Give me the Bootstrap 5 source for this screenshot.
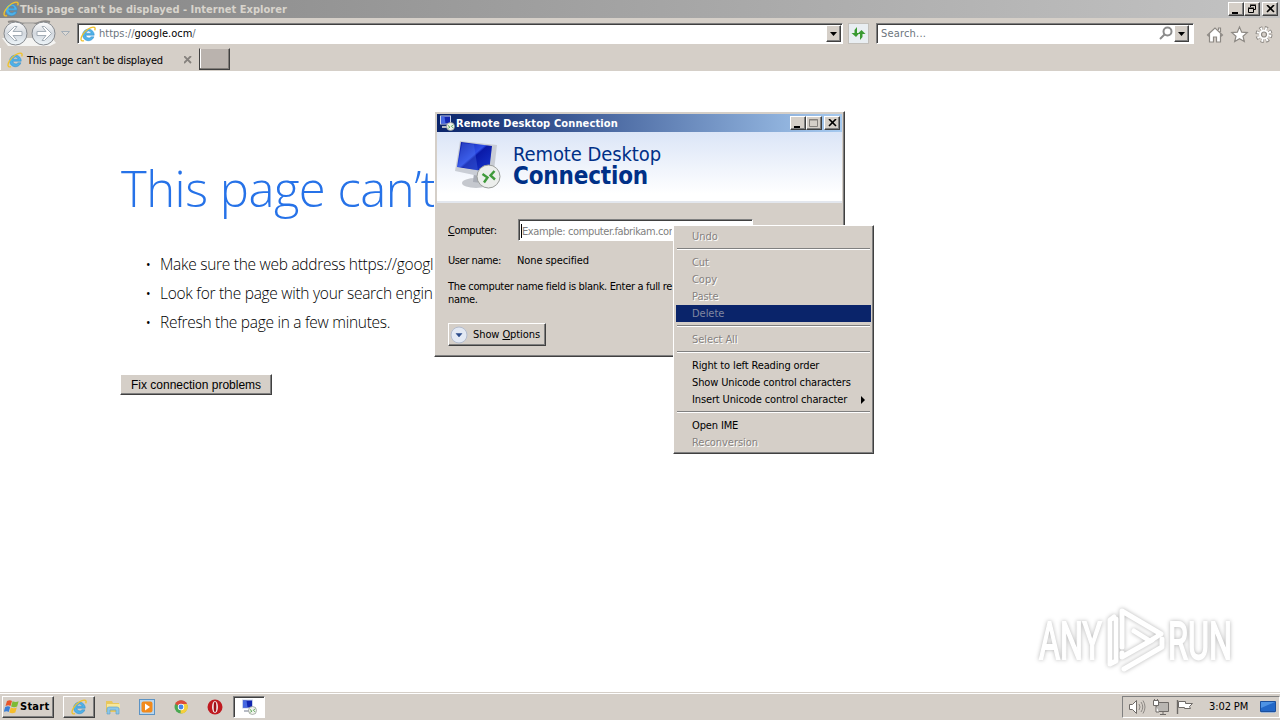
<!DOCTYPE html>
<html lang="en">
<head>
<meta charset="utf-8">
<meta name="viewport" content="width=device-width, initial-scale=1">
<title>This page can't be displayed</title>
<link href="https://cdn.jsdelivr.net/npm/bootstrap@5.3.0/dist/css/bootstrap.min.css" rel="stylesheet">
<script src="https://cdn.jsdelivr.net/npm/bootstrap@5.3.0/dist/js/bootstrap.bundle.min.js" defer></script>
<style>
:root{--face:#d5cfc8;--lo:#808080;--dk:#404040}
body{font:11px/13px "DejaVu Sans Condensed","DejaVu Sans",sans-serif;color:#000;background:#fff;white-space:nowrap}
svg{display:block;flex:none}
.face{background:var(--face)}
.raised{background:var(--face);border:1px solid;border-color:#fff var(--dk) var(--dk) #fff;box-shadow:inset -1px -1px var(--lo)}
.sunken{background:#fff;border:1px solid;border-color:var(--lo) #fff #fff var(--lo);box-shadow:inset 1px 1px var(--dk)}
.ie-title{height:18px;background:linear-gradient(90deg,#858585,#c3c3c3);color:#d8d4cc;font-weight:700;padding:0 2px 0 3px;letter-spacing:.02px;gap:1px}
.cap-btn{width:16px;height:14px;display:grid;place-items:center}
.cap-close{margin-left:2px}
.ie-nav{height:30px}
.addr{height:21px;width:766px;margin-left:6px;padding:2px 1px 1px 2px;gap:3px}
.srch{height:21px;width:318px;margin-left:7px;padding:2px 4px 1px 4px;letter-spacing:.18px}
.drop{width:15px;height:17px;display:grid;place-items:center}
.refresh{width:21px;height:21px;margin-left:5px;border:1px solid #c2bfba;background:#e9eef2;display:grid;place-items:center}
.tools{margin-left:5px}
.ie-tabs{height:23px}
.tab-on{width:199px;height:22px;border-left:1px solid #fff;padding:2px 6px 0 6px;letter-spacing:-.21px;gap:4px}
.tab-new{width:31px;height:22px;background:#bab3ae;border:1px solid var(--dk);border-top-color:#d5cfc8;box-shadow:inset -1px -1px #807c78,inset 1px 0 #fff}
.page{padding:87px 0 0 120px;font-family:"Open Sans",sans-serif;font-weight:300}
.page-text{width:315px}
.page h1{font-size:49px;line-height:60px;font-weight:300;color:#2672e8;margin:0 0 0 1px;letter-spacing:-.5px}
.tips{margin:32px 0 0;padding-left:40px;font-size:15.5px;line-height:29px;color:#000;list-style:none;letter-spacing:-.28px}
.tips li::before{content:"•";font-size:12px;font-weight:400;position:absolute;margin-left:-14px}
.fix{margin-top:37px;width:152px;height:21px;font:12px/18px "Liberation Sans",sans-serif;padding:0 0 0 10px}
.rdp{position:absolute;left:434px;top:111px;width:411px;height:246px;padding:2px}
.rdp-title{height:18px;background:linear-gradient(90deg,#0a246a,#a6caf0);color:#fff;font-weight:700;padding:0 2px;gap:1px;letter-spacing:.14px}
.rdp-head{height:71px;background:linear-gradient(#dbe5f7,#fff 90%);border-bottom:2px solid #e3e7ee;padding:7px 0 0 17px;color:#003087;gap:11px}
.rdp-head svg{margin-top:1px}
.rdp-head .l1{font-size:20px;line-height:24px;margin-top:3px;letter-spacing:-.09px}
.rdp-head .l2{font-size:24px;line-height:20px;font-weight:700;letter-spacing:-.18px}
.rdp-body{padding:16px 11px 0}
.lbl{width:69px;letter-spacing:-.42px}
.lbl.pt-px{padding-top:1px}
.none-spec{letter-spacing:-.1px}
.comp{width:235px;height:22px;padding:4px 2px;color:#808080;letter-spacing:-.38px;margin-left:1px}
.comp-text{width:151px;border-left:1px solid #000;padding-top:1px;overflow:hidden}
.who{margin-top:13px}
.note{margin:13px 0 0;width:225px;letter-spacing:-.32px}
.opts{width:98px;height:23px;margin-top:17px;letter-spacing:-.09px;padding:0}
.menu-win{position:absolute;left:673px;top:225px;width:201px;height:229px;padding:2px}
.mi{height:17px;padding:0 3px 0 16px;letter-spacing:-.14px}
.mi.off{color:#868280;text-shadow:1px 1px #fff;letter-spacing:-.04px}
.mi.hot{background:#0a246a;text-shadow:none;color:#8087a0}
.ms{height:9px;padding:3px 1px 0}
.ms::before{content:"";display:block;height:2px;border-top:1px solid var(--lo);background:#fff}
.watermark{position:absolute;left:1030px;top:599px;filter:drop-shadow(0 0 2px #b4b4b4)}
.taskbar{height:28px;border-top:1px solid #d5cfc8;box-shadow:inset 0 1px #fff;padding:2px 0 2px 2px}
.start{width:52px;height:22px;padding:0 0 0 1px;letter-spacing:.25px}
.task{width:32px;height:22px;display:grid;place-items:center}
.task-first{margin-left:9px}
.task-chrome,.task-rdp{margin-left:2px}
.tray{width:158px;height:22px;border:1px solid;border-color:var(--lo) #fff #fff var(--lo);padding:0 3px 0 4px}
.clock{letter-spacing:-.1px;margin:0 12px 0 14px}
</style>
</head>
<body class="vh-100 overflow-hidden d-flex flex-column position-relative">
<svg width="0" height="0" class="position-absolute">
<defs>
<linearGradient id="scr" x2="1" y2="1"><stop stop-color="#0a17a0"/><stop offset=".45" stop-color="#2f4fe8"/><stop offset=".5" stop-color="#0a1aa8"/><stop offset="1" stop-color="#1838d0"/></linearGradient>
<linearGradient id="orb" y2="1" x2="0"><stop stop-color="#fff"/><stop offset=".5" stop-color="#d3d8de"/><stop offset="1" stop-color="#eef6fa"/></linearGradient>
<symbol id="ie" viewBox="0 0 16 16"><path d="M14.200 9.200H5.800a2.900 2.900 0 0 0 5.200 1.600h2.900a5.800 5.800 0 1 1 .3-1.600zM5.900 7.200h5.300a2.700 2.700 0 0 0-5.300 0z" fill="#4fb2e8" stroke="#2a86c8" stroke-width=".5" fill-rule="evenodd"/><path d="M4 14.600C.9 16-.1 13 2.500 8.800 5.500 4.200 11.800-.2 14.400 1.400c1 .7.8 1.900.2 3" fill="none" stroke="#f0c22c" stroke-width="1.300"/></symbol>
<symbol id="rd" viewBox="0 0 48 50"><ellipse cx="22" cy="43" rx="14" ry="5" fill="#c5c8ce"/><path d="M20 32l10 3-2 8-9-1z" fill="#a9adb6"/><path d="M6 1l37 4-4 34L1 31z" fill="#c9cdd5"/><path d="M7 2l31 4-3 26L3 27z" fill="url(#scr)"/><path d="M8 3l12 1.500 4 26-20-4z" fill="#5a80f0" opacity=".3"/><circle cx="34.500" cy="36.500" r="11.500" fill="#eceeec" stroke="#9a9d9a"/><path d="M28.500 34l5 3.500-3.500 5M40.500 31l-4 4.500 4.500 4" fill="none" stroke="#3f9a3a" stroke-width="2.400"/></symbol>
<symbol id="rds" viewBox="0 0 16 16"><path d="M1 .5h11v9H1z" fill="#c9d2ea"/><path d="M2 1.500h9v7H2z" fill="#1226b0"/><path d="M2 1.500h3.500l1 7H2z" fill="#4668e0"/><path d="M3 11h6v2H3z" fill="#b8bcc6"/><circle cx="11.500" cy="11.500" r="4" fill="#eef2ea" stroke="#8d928c" stroke-width=".7"/><path d="M9 10.500l1.800 1.500-1.500 1.500M13.900 9.800l-1.400 1.500 1.400 1.500" fill="none" stroke="#3f9a3a" stroke-width=".9"/></symbol>
<symbol id="dn" viewBox="0 0 7 4"><path d="M0 0h7L3.500 4z"/></symbol>
</defs>
</svg>

<header class="ie-title d-flex align-items-center">
  <svg width="16" height="16"><use href="#ie"/></svg><span>This page can't be displayed - Internet Explorer</span>
  <div class="ms-auto d-flex">
    <span class="cap-btn raised"><svg width="10" height="9"><path d="M1 7h6v2H1z"/></svg></span>
    <span class="cap-btn raised"><svg width="10" height="10" fill="none" stroke="#000"><path d="M3.500 3V1.500h5v4H7M3 1h6M1.500 4.500h5v4h-5zM1 4h6"/></svg></span>
    <span class="cap-btn cap-close raised"><svg width="9" height="8" stroke="#000" stroke-width="1.600"><path d="M1 0l7 7M8 0L1 7"/></svg></span>
  </div>
</header>
<nav class="ie-nav face d-flex align-items-center">
  <svg width="71" height="30"><path d="M2 20h50l4 5-6 3H8z" fill="#f4f4f2"/><path d="M8 4q6-2 12 1 9 5 18 0 6-3 12-1" stroke="#8e8b88" stroke-width="2" fill="#b5b2ae"/><path d="M22 6h15v14H22z" fill="#c9c6c2"/><circle cx="15.500" cy="15.500" r="11.500" fill="url(#orb)" stroke="#85898e"/><circle cx="43.500" cy="15.500" r="11.500" fill="url(#orb)" stroke="#85898e"/><g fill="#fff" stroke="#a3adb6"><path d="M7.500 15.500l7-7h2.500l-4 5h9v4h-9l4 5h-2.500z"/><path d="M51.500 15.500l-7-7H42l4 5h-9v4h9l-4 5h2.500z"/><path d="M61.500 13.500h8l-4 4z" fill="#dedad5"/></g></svg>
  <div class="addr sunken d-flex align-items-center"><svg width="16" height="16"><use href="#ie"/></svg><span class="text-secondary">https://<span class="text-black">google.ocm</span>/</span><span class="drop raised ms-auto"><svg width="7" height="4"><use href="#dn"/></svg></span></div>
  <span class="refresh"><svg width="15" height="15" fill="#3a9a32"><path d="M6 1L3.500 4v3H.500L5 11l3.500-4H6z"/><path d="M9 14l2.500-3V8h3L10.500 4 6.500 8H9z"/></svg></span>
  <div class="srch sunken d-flex align-items-center"><span class="text-secondary">Search...</span><svg class="ms-auto" width="15" height="15" fill="none" stroke="#8b8b8b" stroke-width="2"><circle cx="8.500" cy="5.500" r="4"/><path d="M5.500 8.500l-4.500 4.500"/></svg><span class="drop raised"><svg width="7" height="4"><use href="#dn"/></svg></span></div>
  <svg class="tools" width="76" height="30" fill="#fff" stroke="#8d8984" stroke-width="1.200"><path d="M8.500 17l7.500-7 7.500 7-1 1-1-1v7h-4v-5h-3v5h-4v-7l-1 1zM19.500 12v-2h2v4"/><path d="M40.500 9l2.200 5.200 5.500.4-4.200 3.600 1.300 5.400-4.800-2.900-4.800 2.900 1.300-5.400-4.200-3.600 5.500-.4z"/><g transform="translate(65 16.500)"><circle r="6.500" fill="none" stroke-width="4" stroke-dasharray="2.900 2.200"/><circle r="6" fill="none" stroke="#fff" stroke-width="3" stroke-dasharray="1.800 2.910" stroke-dashoffset="-.5"/><circle r="3.600" fill="none" stroke="#fff" stroke-width="2.500"/><circle r="2.500" fill="#d5cfc8"/></g></svg>
</nav>
<div class="ie-tabs face d-flex">
  <div class="tab-on d-flex align-items-center"><svg width="16" height="16"><use href="#ie"/></svg><span>This page can't be displayed</span><svg class="ms-auto" width="9" height="8" stroke="#85817d" stroke-width="1.800"><path d="M0 0l7 7M7 0L0 7"/></svg></div>
  <div class="tab-new"></div>
</div>

<main class="page flex-grow-1">
  <div class="page-text overflow-hidden">
    <h1>This page can’t</h1>
    <ul class="tips">
      <li>Make sure the web address https://googl</li>
      <li>Look for the page with your search engin</li>
      <li>Refresh the page in a few minutes.</li>
    </ul>
  </div>
  <button class="fix raised text-start d-block">Fix connection problems</button>
</main>

<section class="rdp raised">
  <div class="rdp-title d-flex align-items-center"><svg width="16" height="16"><use href="#rds"/></svg><span>Remote Desktop Connection</span>
    <div class="ms-auto d-flex">
      <span class="cap-btn raised"><svg width="10" height="9"><path d="M1 7h6v2H1z"/></svg></span>
      <span class="cap-btn raised"><svg width="10" height="10" fill="none" stroke="#85817d"><path d="M.500 1.500h8v7h-8zM0 2h9"/></svg></span>
      <span class="cap-btn cap-close raised"><svg width="9" height="8" stroke="#000" stroke-width="1.600"><path d="M1 0l7 7M8 0L1 7"/></svg></span>
    </div>
  </div>
  <div class="rdp-head d-flex"><svg width="48" height="50"><use href="#rd"/></svg><div><div class="l1">Remote Desktop</div><div class="l2">Connection</div></div></div>
  <div class="rdp-body">
    <div class="d-flex align-items-center"><span class="lbl pt-px"><u>C</u>omputer:</span><div class="comp sunken"><div class="comp-text">Example: computer.fabrikam.cor</div></div></div>
    <div class="who d-flex"><span class="lbl">User name:</span><span class="none-spec">None specified</span></div>
    <p class="note">The computer name field is blank. Enter a full re<br>name.</p>
    <button class="opts raised d-flex align-items-center"><svg width="20" height="20"><circle cx="10" cy="10" r="8" fill="#e3e9f4" stroke="#b3bccd"/><path d="M7 8.500h6l-3 3.500z" fill="#2a4a8a" stroke="#2a4a8a" stroke-width=".5"/></svg><span class="ps-1">Show <u>O</u>ptions</span></button>
  </div>
</section>

<div class="menu-win raised">
  <div class="mi off d-flex align-items-center">Undo</div><div class="ms"></div>
  <div class="mi off d-flex align-items-center">Cut</div>
  <div class="mi off d-flex align-items-center">Copy</div>
  <div class="mi off d-flex align-items-center">Paste</div>
  <div class="mi off hot d-flex align-items-center">Delete</div><div class="ms"></div>
  <div class="mi off d-flex align-items-center">Select All</div><div class="ms"></div>
  <div class="mi d-flex align-items-center">Right to left Reading order</div>
  <div class="mi d-flex align-items-center">Show Unicode control characters</div>
  <div class="mi d-flex align-items-center">Insert Unicode control character<svg class="ms-auto" width="8" height="8"><path d="M1 0l4 4-4 4z"/></svg></div><div class="ms"></div>
  <div class="mi d-flex align-items-center">Open IME</div>
  <div class="mi off d-flex align-items-center">Reconversion</div>
</div>

<svg class="watermark" width="210" height="80" font-family="Roboto,sans-serif" font-size="52" fill="#fff" stroke="#fff">
  <text x="9" y="60" textLength="63" lengthAdjust="spacingAndGlyphs" stroke-width="1.800">ANY</text>
  <text x="138" y="60" textLength="64" lengthAdjust="spacingAndGlyphs" stroke-width="1.800">RUN</text>
  <g fill="none" stroke-width="5" stroke-linejoin="round" stroke-linecap="round"><path d="M92 48V12l39 23-11 7-16-10"/><path d="M84 18l-4 3v44l6-3V20"/><path d="M92 54v4l30-17M94 70l38-22v-8"/></g>
</svg>

<footer class="taskbar face d-flex align-items-center">
  <button class="start raised d-flex align-items-center fw-bold"><svg width="16" height="16"><path d="M3 2q3-1.500 5 0L6.500 7q-2-1.500-5 0z" fill="#e8562a"/><path d="M8.600 2.200q3 1.500 6 0L13.100 7.500q-3 1.500-6 0z" fill="#7dbb36"/><path d="M1.200 8q3-1.500 5 0l-1.500 5q-2-1.500-5 0z" fill="#3b7fd6"/><path d="M6.800 8.500q3 1.500 6 0l-1.500 5q-3 1.500-6 0z" fill="#f5bd2c"/></svg>Start</button>
  <span class="task task-first raised"><svg width="16" height="16"><use href="#ie"/></svg></span>
  <span class="task ms-1 ps-1 pe-2"><svg width="16" height="16"><path d="M1 2h6l1 2h6v9H1z" fill="#e8c75c"/><path d="M2 5h13v4H2z" fill="#f7e79a"/><path d="M2 15V10q0-2 2-2h8q2 0 2 2v5h-3v-4H5v4z" fill="#8cc7e8" stroke="#5b9fc8" stroke-width=".6"/></svg></span>
  <span class="task"><svg width="16" height="16"><rect x=".5" y=".5" width="15" height="15" fill="#b9d6ee" stroke="#5c93c4"/><rect x="2.500" y="2.500" width="11" height="11" rx="2" fill="#f28a1c"/><path d="M6 4.500l5 3.500-5 3.500z" fill="#fff"/></svg></span>
  <span class="task task-chrome"><svg width="16" height="16"><circle cx="8" cy="8" r="6.500" fill="#4aa851"/><path d="M8 8L2.200 5A6.500 6.500 0 0 1 14 5z" fill="#dd4b3a"/><path d="M8 8l-.5 6.500A6.500 6.500 0 0 0 14 5H8z" fill="#f6cf3b"/><circle cx="8" cy="8" r="3.200" fill="#fff"/><circle cx="8" cy="8" r="2.400" fill="#4685e8"/></svg></span>
  <span class="task task-chrome"><svg width="16" height="16"><circle cx="8" cy="8" r="7.500" fill="#c01a20"/><ellipse cx="8" cy="8" rx="3" ry="6" fill="#f0e4e4"/><ellipse cx="8" cy="8" rx="1.300" ry="5.200" fill="#a01018"/></svg></span>
  <span class="task task-rdp sunken"><svg width="16" height="16"><use href="#rds"/></svg></span>
  <div class="tray ms-auto d-flex align-items-center">
    <svg width="68" height="18" fill="#fff" stroke="#6e6a67"><path d="M2.500 6.500h3l4-4v13l-4-4h-3z"/><path d="M12 6q2 3 0 6M14 4q3.500 5 0 10M16 2.500q4 6.500 0 13" fill="none" stroke="#8d8985"/><path d="M29.500 4.500h12v9h-12z" fill="#b9b6b2"/><path d="M33 16.500h6M36 14v2M26.500 2.500h5v5h-5zM27.500 1v2M30.500 1v2M29 8v6h3"/><path d="M50.500 2v14" stroke-width="1.400"/><path d="M51.500 3.500h7v2h7l-3 3 1 2h-6v-1h-6z"/></svg>
    <span class="clock">3:02 PM</span>
    <svg width="16" height="16"><path d="M.5 2.500h15v10H.5z" fill="#2368c8" stroke="#1b4f9c"/><path d="M1 3h14L1 9z" fill="#4e93e4"/><path d="M1 13.500h14" stroke="#9bb5d8"/></svg>
  </div>
</footer>
</body>
</html>
